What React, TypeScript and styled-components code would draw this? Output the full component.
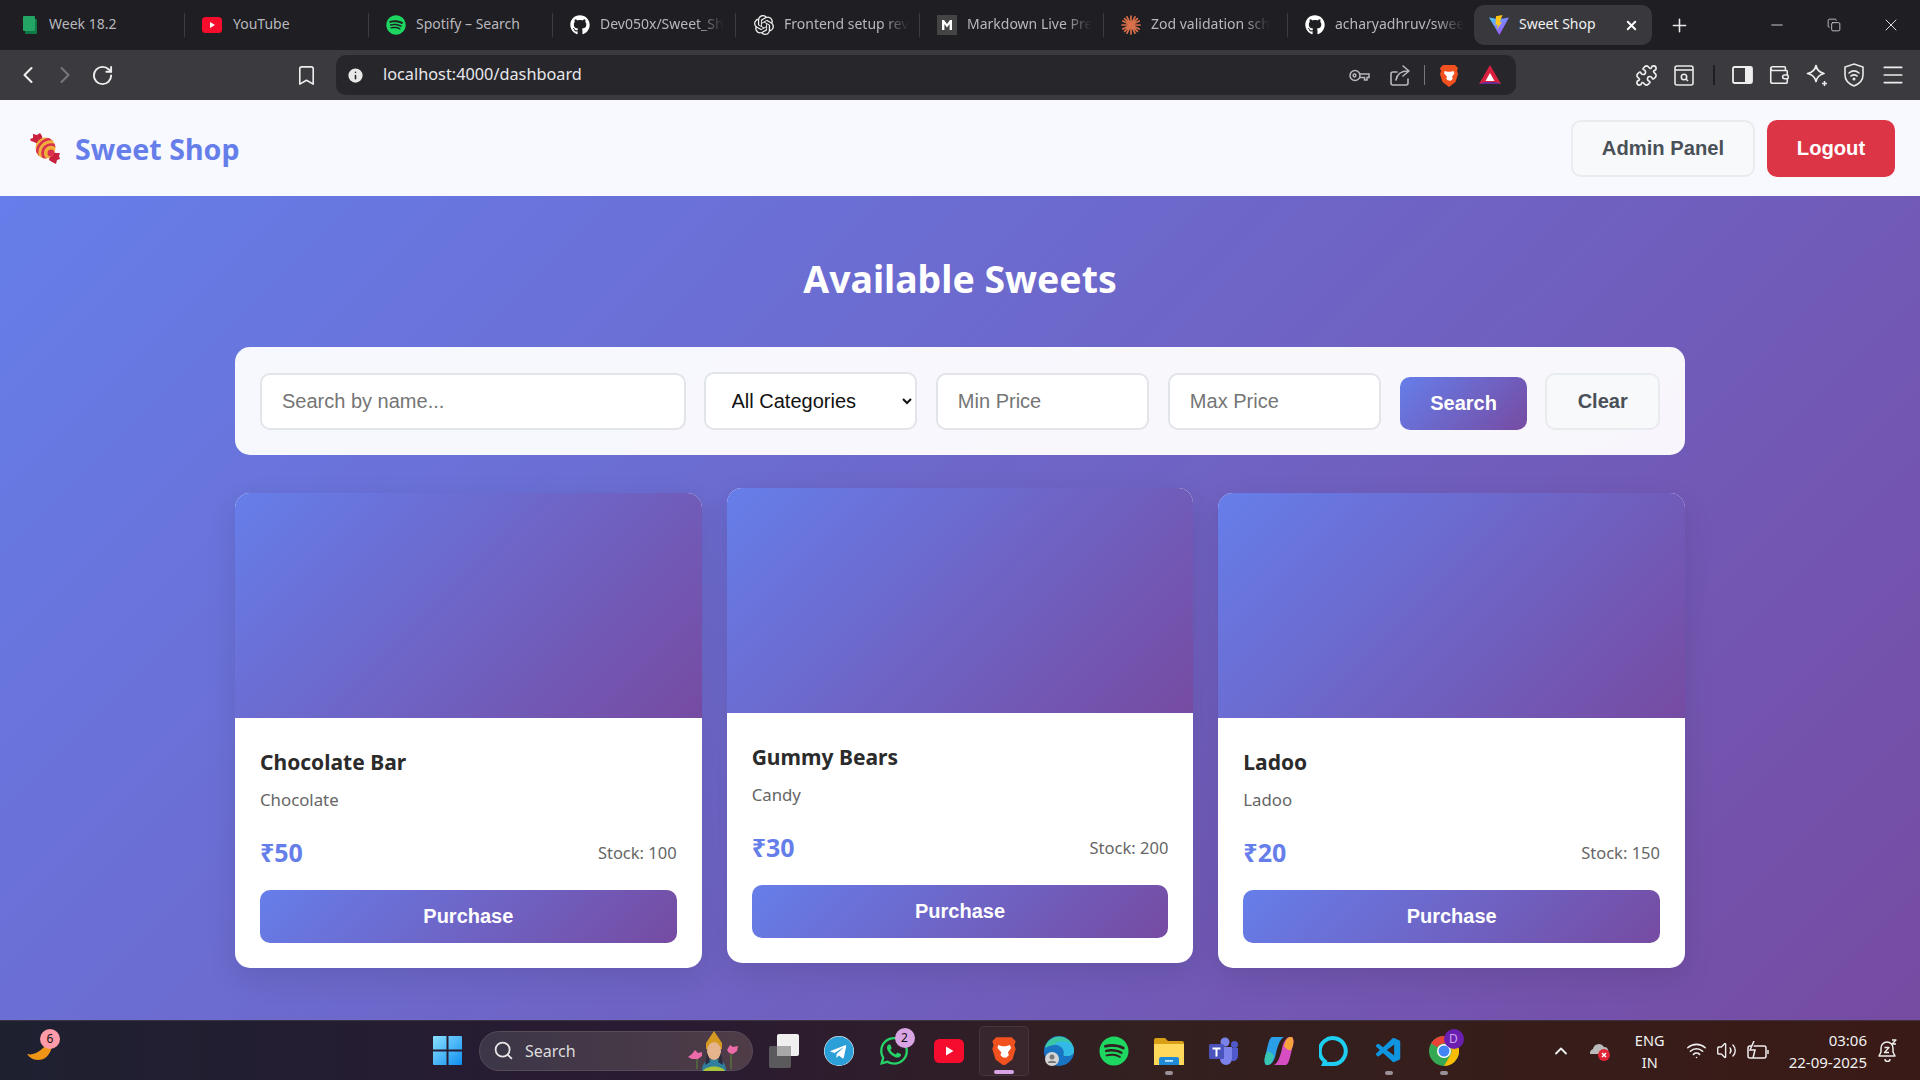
import React from 'react';
import styled, { createGlobalStyle } from 'styled-components';
import { FaGithub, FaSpotify, FaTelegram, FaWhatsapp } from 'react-icons/fa';
import { SiOpenai } from 'react-icons/si';
import { VscVscode } from 'react-icons/vsc';
import {
  Bookmark, ChevronLeft, ChevronRight, ChevronUp, Info, Menu, Plus, Puzzle,
  RotateCw, Search, Volume2, Wallet, Wifi, X, Minus, Copy,
} from 'lucide-react';

const GlobalStyle = createGlobalStyle`
  html, body { margin: 0; padding: 0; width: 1920px; height: 1080px; overflow: hidden; }
  * { box-sizing: border-box; }
  body { font-family: "Noto Sans", "Open Sans", sans-serif; }
`;

const UI = '"Noto Sans", "Open Sans", sans-serif';
const ARIAL = '"Liberation Sans", Arial, sans-serif';
const GRADIENT = 'linear-gradient(135deg, #667eea 0%, #764ba2 100%)';

const YoutubeIcon = ({ size = 20 }: { size?: number }) => (
  <svg width={size} height={size * 0.8} viewBox="0 0 20 16">
    <rect width="20" height="16" rx="3.5" fill="#f60c2c" />
    <path d="M8 5l5 3-5 3z" fill="#fff" />
  </svg>
);

const SheetIcon = () => (
  <svg width="16" height="18" viewBox="0 0 16 18">
    <rect x="3" y="3" width="12" height="15" rx="1" fill="#0f7a45" />
    <rect x="1" y="0" width="12" height="15" rx="1" fill="#23a566" />
  </svg>
);

const MarkdownIcon = () => (
  <svg width="20" height="20" viewBox="0 0 20 20">
    <rect width="20" height="20" fill="#444" />
    <path d="M5 15V5h2l3 4 3-4h2v10h-2.4V9L10 12.5 7.4 9v6z" fill="#fff" />
  </svg>
);

const ZodIcon = () => (
  <svg width="20" height="20" viewBox="0 0 20 20" stroke="#d9704a" strokeWidth="1.7" strokeLinecap="round">
    <path d="M10 1v18M1 10h18M3.6 3.6l12.8 12.8M16.4 3.6L3.6 16.4M6 1.8l8 16.4M14 1.8L6 18.2M1.8 6l16.4 8M18.2 6L1.8 14" />
  </svg>
);

const ViteIcon = () => (
  <svg width="20" height="20" viewBox="0 0 20 20">
    <path d="M0 2.5l10 1.8 10-1.8L10.4 20z" fill="url(#viteFill)" />
    <path d="M13.5 0L7 1.3 6.5 10l2.2-.4-.6 4.4 5-7-2.5.4z" fill="#ffc517" />
    <defs>
      <linearGradient id="viteFill" x1="0" y1="0" x2="1" y2="1">
        <stop offset="0" stopColor="#41d1ff" />
        <stop offset="1" stopColor="#bd34fe" />
      </linearGradient>
    </defs>
  </svg>
);

const BraveIcon = ({ size = 20 }: { size?: number }) => (
  <svg width={size} height={size * 1.15} viewBox="0 0 20 23">
    <path d="M4 1h12l3 3-1 3 1 3-2.5 8L10 23l-6.5-5L1 10l1-3-1-3z" fill="#f1501f" />
    <path d="M5.5 7l3 .8h3l3-.8 1 2.2-2.5 3.5.8 2-2.3 2.3H10 9.5l-2.3-2.3.8-2L5 9.2z" fill="#fff" />
    <path d="M8.5 16.5h3L10 18z" fill="#f1501f" />
  </svg>
);

const BatIcon = () => (
  <svg width="22" height="20" viewBox="0 0 22 20">
    <path d="M11 0l11 19H0z" fill="#d8203e" />
    <path d="M0 19l5-2h12l5 2z" fill="#662d91" />
    <path d="M11 8l4.5 8h-9z" fill="#fff" />
  </svg>
);

const KeyIcon = () => (
  <svg width="21" height="13" viewBox="0 0 21 13" fill="none" stroke="#b8b8bc" strokeWidth="1.5">
    <circle cx="6" cy="6.5" r="5" />
    <circle cx="5.5" cy="6.5" r="1.4" />
    <path d="M11 5h9v3.500h-2v2.500h-2.500V8.500H11" />
  </svg>
);

const ShareIcon = () => (
  <svg width="20" height="21" viewBox="0 0 20 21" fill="none" stroke="#b8b8bc" strokeWidth="1.6" strokeLinecap="round" strokeLinejoin="round">
    <path d="M7 7H3a2 2 0 00-2 2v9a2 2 0 002 2h13a2 2 0 002-2v-4" />
    <path d="M6 15c1-6 5-9 12-9M13 1l6 5-6 5" />
  </svg>
);

const StarIcon = () => (
  <svg width="23" height="23" viewBox="0 0 23 23" fill="none" stroke="#eee" strokeWidth="1.7" strokeLinejoin="round">
    <path d="M10 1.500c1 5 3.500 7 8 8-4.500 1-7 3.500-8 8-1-4.500-3.500-7-8.500-8 5-1 7.500-3 8.500-8z" />
    <path d="M18.500 17v5M16 19.500h5" strokeWidth="1.500" />
  </svg>
);

const ShieldIcon = () => (
  <svg width="20" height="24" viewBox="0 0 20 24" fill="none" stroke="#e8e8e8" strokeWidth="1.600" strokeLinecap="round">
    <path d="M10 1l9 3v8c0 6-4 9-9 11-5-2-9-5-9-11V4z" />
    <path d="M5 10c3-2.500 7-2.500 10 0M7 13c2-1.500 4-1.500 6 0" />
    <circle cx="10" cy="16" r="0.700" />
  </svg>
);

const BellIcon = () => (
  <svg width="19" height="23" viewBox="0 0 19 23" fill="none" stroke="#eee" strokeWidth="1.500" strokeLinejoin="round">
    <path d="M9 3a6 6 0 00-6 6v4l-2 4h16l-2-4V9a6 6 0 00-6-6z" />
    <path d="M7 20a2.500 2.500 0 005 0" />
    <path d="M6.500 8.500h4.500l-4.500 5h4.500M14 1h4l-4 4h4" strokeWidth="1.300" />
  </svg>
);

const CandyIcon = () => (
  <svg width="32" height="32" viewBox="0 0 32 32">
    <defs>
      <clipPath id="candyBall">
        <ellipse cx="16.500" cy="16" rx="10" ry="10.500" />
      </clipPath>
    </defs>
    <path d="M1 7l3-1 0-4 4 1 3-2 2 3 1 5-5 3-4-2-3-1z" fill="#c9213f" />
    <path d="M24 20l3 1 4 0-1 3 1 3-3 1-1 4-4-2-3-2 1-5z" fill="#c9213f" />
    <g clipPath="url(#candyBall)">
      <rect x="5" y="5" width="24" height="24" fill="#f0ae3c" />
      <circle cx="22" cy="21" r="3.500" fill="#d9304f" />
      <circle cx="22" cy="21" r="8.500" fill="none" stroke="#d9304f" strokeWidth="2.600" />
      <circle cx="22" cy="21" r="14" fill="none" stroke="#d9304f" strokeWidth="2.600" />
    </g>
  </svg>
);

const WinIcon = () => (
  <svg width="29" height="29" viewBox="0 0 29 29">
    <defs>
      <linearGradient id="winFill" x1="0" y1="0" x2="1" y2="1">
        <stop offset="0" stopColor="#8ce0ff" />
        <stop offset="1" stopColor="#0f8ff0" />
      </linearGradient>
    </defs>
    <path d="M0 1a1 1 0 011-1h12.500v13.500H0zM15.500 0H28a1 1 0 011 1v12.500H15.500zM0 15.500h13.500V29H1a1 1 0 01-1-1zM15.500 15.500H29V28a1 1 0 01-1 1H15.500z" fill="url(#winFill)" />
  </svg>
);

const MoonIcon = () => (
  <svg width="28" height="28" viewBox="0 0 28 28">
    <path d="M25 2c2 10-2 24-14 24C6 26 2 23 0 20c8 2 17-4 25-18z" fill="#ee9416" />
  </svg>
);

const GoddessIcon = () => (
  <svg width="52" height="40" viewBox="0 0 52 40">
    <path d="M10 38V22M44 38V18" stroke="#5a8a3a" strokeWidth="1" />
    <path d="M1 26l4-3 3-4 3 3 4-1 0 4-4 3-6 0z" fill="#ec6ba8" />
    <path d="M40 19l3-5 3 2 5-1-1 5-4 3-4-1z" fill="#ec6ba8" />
    <path d="M15 40c0-8 4-12 12-12s12 4 12 12z" fill="#2f7f9e" />
    <path d="M19 12l8-12 8 12v6H19z" fill="#d59a22" />
    <ellipse cx="27" cy="20" rx="7" ry="9" fill="#e6b48c" />
    <path d="M20 22l-2 12 5-3zM34 22l2 12-5-3z" fill="#2b2b40" />
    <path d="M16 40c3-6 19-6 22 0z" fill="#a7c43a" />
  </svg>
);

const FilesIcon = () => (
  <svg width="30" height="28" viewBox="0 0 30 28">
    <path d="M0 3a2 2 0 012-2h9l3 3h14a2 2 0 012 2v4H0z" fill="#d89f17" />
    <path d="M0 7h30v21H0z" fill="#ffd85c" />
    <path d="M7 20h16a2 2 0 012 2v6H5v-6a2 2 0 012-2z" fill="#1f8ad6" />
    <rect x="11" y="23" width="8" height="1.800" fill="#bfe3fb" />
  </svg>
);

const TeamsIcon = () => (
  <svg width="30" height="28" viewBox="0 0 30 28">
    <circle cx="16" cy="5" r="4.500" fill="#7b83eb" />
    <circle cx="25.500" cy="7.500" r="3.500" fill="#5059c9" />
    <path d="M19 11h10v8a5 5 0 01-6 5z" fill="#5059c9" />
    <path d="M9 10h14v12a6 6 0 01-12 0z" fill="#7b83eb" />
    <rect y="7" width="15" height="15" rx="1.500" fill="#4b53bc" />
    <path d="M3.500 10.500h8v2H8.500v7h-2v-7h-3z" fill="#fff" />
  </svg>
);

const EdgeIcon = () => (
  <svg width="30" height="30" viewBox="0 0 30 30">
    <circle cx="15" cy="15" r="15" fill="#1a74c4" />
    <path d="M1 12C3 3 12-1 19 1c7 2 11 8 11 14 0 4-4 5-8 5-2 0-3-1-2-3 0-5-5-9-10-8-4 .5-7 2-9 3z" fill="#3bc7a3" />
    <path d="M30 15c0 4-4 5-8 5-2 0-3-1-2-3 0-5-5-9-10-8 4-6 20-5 20 6z" fill="#33b9e8" />
    <circle cx="8" cy="23" r="7" fill="#d5d5d5" />
    <circle cx="8" cy="21" r="2.500" fill="#777" />
    <path d="M3.500 27c1-3 8-3 9 0z" fill="#777" />
  </svg>
);

const CopilotIcon = () => (
  <svg width="30" height="28" viewBox="0 0 30 28">
    <path d="M8 0h12c-4 2-6 8-8 16-1 6-4 12-8 12H2C0 26 0 22 2 16 4 8 5 1 8 0z" fill="#2a9fe8" />
    <path d="M3 15c2-1 5 1 7 4l-2 6c-1 2-3 3-4 3H2C0 26 0 20 3 15z" fill="#38c6b1" />
    <path d="M22 28H10c4-2 6-8 8-16 1-6 4-12 8-12h2c2 2 2 6 0 12-2 8-3 15-6 16z" fill="#d74ec3" />
    <path d="M27 13c-2 1-5-1-7-4l2-6c1-2 3-3 4-3h2c2 2 2 8-1 13z" fill="#f6a33c" />
  </svg>
);

const AlexaIcon = () => (
  <svg width="30" height="30" viewBox="0 0 30 30">
    <path d="M6 25.5A13 13 0 1115 28H5z" fill="none" stroke="#1ecdf0" strokeWidth="4" />
  </svg>
);

const ChromeIcon = () => (
  <svg width="30" height="30" viewBox="0 0 30 30">
    <circle cx="15" cy="15" r="15" fill="#34a853" />
    <path d="M15 0a15 15 0 0113 7.5H15a7.5 7.5 0 00-6.500 3.750L2 7.500A15 15 0 0115 0z" fill="#ea4335" />
    <path d="M28 7.5A15 15 0 0115 30l6.500-11.250A7.5 7.5 0 0015 7.500z" fill="#fbbc04" />
    <circle cx="15" cy="15" r="7" fill="#fff" />
    <circle cx="15" cy="15" r="5.500" fill="#4285f4" />
  </svg>
);

const StackIcon = () => (
  <svg width="30" height="34" viewBox="0 0 30 34">
    <rect x="0" y="12" width="22" height="22" rx="2" fill="#5a5a5c" />
    <rect x="8" y="0" width="22" height="22" rx="2" fill="#f0f0f0" />
    <rect x="8" y="12" width="14" height="10" fill="#a8a8a8" />
  </svg>
);

const CloudIcon = () => (
  <svg width="22" height="22" viewBox="0 0 22 22">
    <path d="M1 14a5 5 0 013-5 6 6 0 0111-2 4 4 0 013 7z" fill="#bbb" />
    <circle cx="15" cy="15" r="6" fill="#e02436" />
    <path d="M13 13l4 4M17 13l-4 4" stroke="#fff" strokeWidth="1.500" />
  </svg>
);

const BatteryIcon = () => (
  <svg width="24" height="20" viewBox="0 0 24 20" fill="none" stroke="#eee" strokeWidth="1.500">
    <rect x="2" y="5" width="18" height="12" rx="2" />
    <path d="M22 9v4" />
    <path d="M8 0L4 9h5l-2 8" fill="#3a1a18" />
  </svg>
);

const PanelIcon = () => (
  <svg width="21" height="18" viewBox="0 0 21 18">
    <rect x="1" y="1" width="19" height="16" rx="1.500" fill="none" stroke="#eee" strokeWidth="1.800" />
    <rect x="13" y="1" width="7" height="16" fill="#eee" />
  </svg>
);

const ReaderIcon = () => (
  <svg width="20" height="21" viewBox="0 0 20 21" fill="none" stroke="#e8e8e8" strokeWidth="1.600">
    <rect x="1" y="1" width="18" height="19" rx="2" />
    <path d="M1 5h18" />
    <circle cx="10" cy="12" r="2.700" />
    <path d="M12 14l2 2" />
  </svg>
);

const tabs = [
  { title: 'Week 18.2', icon: <SheetIcon />, width: 185, inset: 22, gap: 11 },
  { title: 'YouTube', icon: <YoutubeIcon />, width: 184, inset: 17, gap: 11 },
  { title: 'Spotify – Search', icon: <FaSpotify size={20} color="#1ed760" />, width: 184, inset: 17, gap: 10 },
  { title: 'Dev050x/Sweet_Sh', icon: <FaGithub size={20} color="#fff" />, width: 183, inset: 17, gap: 10 },
  { title: 'Frontend setup rev', icon: <SiOpenai size={20} color="#eee" />, width: 184, inset: 18, gap: 10 },
  { title: 'Markdown Live Pre', icon: <MarkdownIcon />, width: 184, inset: 17, gap: 10 },
  { title: 'Zod validation sch', icon: <ZodIcon />, width: 184, inset: 17, gap: 10 },
  { title: 'acharyadhruv/swee', icon: <FaGithub size={20} color="#fff" />, width: 186, inset: 17, gap: 10 },
];

const sweets = [
  { name: 'Chocolate Bar', category: 'Chocolate', price: 50, stock: 100 },
  { name: 'Gummy Bears', category: 'Candy', price: 30, stock: 200, raised: true },
  { name: 'Ladoo', category: 'Ladoo', price: 20, stock: 150 },
];

const App = () => (
  <Screen>
    <GlobalStyle />
    <TabBar>
      {tabs.map((t, i) => (
        <Tab key={t.title} $width={t.width} $inset={t.inset} $gap={t.gap} $last={i === tabs.length - 1}>
          {t.icon}
          <TabTitle $fade={i > 2}>{t.title}</TabTitle>
        </Tab>
      ))}
      <ActiveTab>
        <ViteIcon />
        <ActiveTitle>Sweet Shop</ActiveTitle>
        <X size={15} color="#fff" strokeWidth={3} />
      </ActiveTab>
      <NewTab><Plus size={21} color="#e8e8e8" strokeWidth={1.8} /></NewTab>
      <WindowControls>
        <Minus size={18} color="#ddd" strokeWidth={1.2} />
        <Copy size={14} color="#ddd" strokeWidth={1.4} />
        <X size={20} color="#ddd" strokeWidth={1.2} />
      </WindowControls>
    </TabBar>

    <Toolbar>
      <NavGroup>
        <ChevronLeft size={28} color="#eee" strokeWidth={1.8} />
        <ChevronRight size={28} color="#77777b" strokeWidth={1.8} />
        <RotateCw size={23} color="#eee" strokeWidth={2} />
      </NavGroup>
      <Bookmark size={23} color="#eee" strokeWidth={1.7} />
      <AddressBar>
        <Info size={19} color="#26262b" fill="#e8e8e8" strokeWidth={2} />
        <Url>localhost:4000/dashboard</Url>
        <AddressActions>
          <KeyIcon />
          <ShareIcon />
          <AddressDivider />
          <BraveIcon size={20} />
          <BatIcon />
        </AddressActions>
      </AddressBar>
      <ToolIcons>
        <Puzzle size={23} color="#eee" strokeWidth={1.7} />
        <ReaderIcon />
        <ToolDivider />
        <PanelIcon />
        <Wallet size={22} color="#eee" strokeWidth={1.7} />
        <StarIcon />
        <ShieldIcon />
        <Menu size={26} color="#eee" strokeWidth={1.6} />
      </ToolIcons>
    </Toolbar>

    <SiteHeader>
      <Brand>
        <CandyIcon />
        <BrandName>Sweet Shop</BrandName>
      </Brand>
      <HeaderActions>
        <AdminButton>Admin Panel</AdminButton>
        <LogoutButton>Logout</LogoutButton>
      </HeaderActions>
    </SiteHeader>

    <Main>
      <PageTitle>Available Sweets</PageTitle>
      <FilterCard>
        <NameInput placeholder="Search by name..." />
        <CategorySelect defaultValue="all">
          <option value="all">All Categories</option>
        </CategorySelect>
        <PriceInput placeholder="Min Price" />
        <PriceInput placeholder="Max Price" />
        <SearchButton>Search</SearchButton>
        <ClearButton>Clear</ClearButton>
      </FilterCard>
      <Grid>
        {sweets.map((s) => (
          <Card key={s.name} $raised={s.raised}>
            <CardImage />
            <CardBody>
              <SweetName>{s.name}</SweetName>
              <Category>{s.category}</Category>
              <PriceRow>
                <Price>₹{s.price}</Price>
                <Stock>Stock: {s.stock}</Stock>
              </PriceRow>
              <PurchaseButton>Purchase</PurchaseButton>
            </CardBody>
          </Card>
        ))}
      </Grid>
    </Main>

    <Taskbar>
      <TaskLeft>
        <Badged>
          <MoonIcon />
          <CountBadge $bg="#ff9aa8" $top={-5} $right={-5}>6</CountBadge>
        </Badged>
      </TaskLeft>
      <WinCell><WinIcon /></WinCell>
      <SearchPill>
        <Search size={21} color="#e8e8e8" strokeWidth={2} />
        <PillText>Search</PillText>
        <GoddessSlot><GoddessIcon /></GoddessSlot>
      </SearchPill>
      <TaskIcon><StackIcon /></TaskIcon>
      <TaskIcon><FaTelegram size={30} color="#2a9fd8" style={{ background: '#fff', borderRadius: '50%' }} /></TaskIcon>
      <TaskIcon>
        <Badged>
          <FaWhatsapp size={32} color="#25d366" />
          <CountBadge $bg="#d8a4e4" $top={-7} $right={-5}>2</CountBadge>
        </Badged>
      </TaskIcon>
      <TaskIcon><YoutubeIcon size={30} /></TaskIcon>
      <ActiveTaskIcon>
        <BraveIcon size={26} />
        <Indicator $active />
      </ActiveTaskIcon>
      <TaskIcon><EdgeIcon /></TaskIcon>
      <TaskIcon><FaSpotify size={30} color="#1ed760" /></TaskIcon>
      <TaskIcon><FilesIcon /><Indicator /></TaskIcon>
      <TaskIcon><TeamsIcon /></TaskIcon>
      <TaskIcon><CopilotIcon /></TaskIcon>
      <TaskIcon><AlexaIcon /></TaskIcon>
      <TaskIcon><VscVscode size={30} color="#0f94e0" /><Indicator /></TaskIcon>
      <TaskIcon>
        <Badged>
          <ChromeIcon />
          <CountBadge $bg="#6a1fb0" $color="#cfa6f0" $top={-7} $right={-5}>D</CountBadge>
        </Badged>
        <Indicator />
      </TaskIcon>
      <Tray>
        <ChevronUp size={20} color="#eee" strokeWidth={2.2} />
        <CloudSlot><CloudIcon /></CloudSlot>
        <Lang><span>ENG</span><span>IN</span></Lang>
        <TrayIcons>
          <Wifi size={21} color="#eee" strokeWidth={1.8} />
          <Volume2 size={21} color="#eee" strokeWidth={1.6} />
          <BatteryIcon />
        </TrayIcons>
        <Clock><span>03:06</span><span>22-09-2025</span></Clock>
        <BellIcon />
      </Tray>
    </Taskbar>
  </Screen>
);

export default App;

const Screen = styled.div`
  width: 1920px;
  height: 1080px;
  display: flex;
  flex-direction: column;
  overflow: hidden;
`;

const TabBar = styled.div`
  height: 50px;
  background: #1e1e23;
  display: flex;
  align-items: center;
`;

const Tab = styled.div<{ $width: number; $inset: number; $gap: number; $last?: boolean }>`
  width: ${(p) => p.$width}px;
  height: 24px;
  padding-left: ${(p) => p.$inset}px;
  display: flex;
  align-items: center;
  gap: ${(p) => p.$gap}px;
  flex-shrink: 0;
  border-right: 1px solid ${(p) => (p.$last ? 'transparent' : '#3c3c42')};
  & > svg { flex-shrink: 0; }
`;

const TabTitle = styled.span<{ $fade?: boolean }>`
  font: 14px/20px ${UI};
  margin-top: -2px;
  color: #b8b8bc;
  white-space: nowrap;
  ${(p) =>
    p.$fade &&
    `
    -webkit-mask-image: linear-gradient(90deg, #000 78%, transparent 100%);
    mask-image: linear-gradient(90deg, #000 78%, transparent 100%);
  `}
`;

const ActiveTab = styled.div`
  width: 178px;
  height: 40px;
  background: #38383d;
  border-radius: 10px;
  display: flex;
  align-items: center;
  padding: 0 13px 0 15px;
  gap: 10px;
`;

const ActiveTitle = styled.span`
  font: 14px/20px ${UI};
  margin-top: -2px;
  color: #f2f2f2;
  flex: 1;
`;

const NewTab = styled.div`
  width: 54px;
  display: flex;
  justify-content: center;
`;

const WindowControls = styled.div`
  margin-left: auto;
  width: 152px;
  padding-right: 19px;
  display: flex;
  align-items: center;
  justify-content: space-between;
`;

const Toolbar = styled.div`
  height: 50px;
  background: #3a3a3f;
  display: flex;
  align-items: center;
  padding-left: 14px;
`;

const NavGroup = styled.div`
  width: 281px;
  display: flex;
  align-items: center;
  gap: 9px;
  & > svg:last-child { margin-left: 3px; }
`;

const AddressBar = styled.div`
  margin-left: 18px;
  width: 1180px;
  height: 40px;
  border-radius: 10px;
  background: #26262b;
  display: flex;
  align-items: center;
  padding: 0 15px 0 10px;
`;

const Url = styled.span`
  margin-left: 18px;
  margin-top: -2px;
  font: 16.300px ${UI};
  color: #e8e8ec;
`;

const AddressActions = styled.div`
  margin-left: auto;
  display: flex;
  align-items: center;
  gap: 20px;
`;

const AddressDivider = styled.div`
  width: 1px;
  height: 20px;
  background: #77777b;
  margin: 0 -6px;
`;

const ToolIcons = styled.div`
  margin-left: 119px;
  display: flex;
  align-items: center;
  gap: 15.500px;
`;

const ToolDivider = styled.div`
  width: 2px;
  height: 20px;
  background: #1e1e23;
  margin: 0 1px 0 4px;
`;

const SiteHeader = styled.header`
  height: 96px;
  background: #f8f9ff;
  display: flex;
  align-items: center;
  justify-content: space-between;
  padding: 0 25px 0 29px;
`;

const Brand = styled.div`
  display: flex;
  align-items: center;
  gap: 14px;
`;

const BrandName = styled.span`
  font: 700 28.600px ${UI};
  color: #667eea;
`;

const HeaderActions = styled.div`
  display: flex;
  gap: 12px;
`;

const AdminButton = styled.button`
  width: 184px;
  height: 57px;
  border: 2px solid #e9ecef;
  border-radius: 10px;
  background: #f8f9fa;
  color: #495057;
  font: 700 20.200px ${ARIAL};
`;

const LogoutButton = styled.button`
  width: 128px;
  height: 57px;
  border: 0;
  border-radius: 10px;
  background: #dc3545;
  color: #fff;
  font: 700 20.200px ${ARIAL};
`;

const Main = styled.main`
  flex: 1;
  background: ${GRADIENT};
  display: flex;
  flex-direction: column;
  align-items: center;
  padding-top: 56px;
`;

const PageTitle = styled.h1`
  margin: 0;
  height: 55px;
  font: 700 37.400px/54px ${UI};
  color: #fff;
`;

const FilterCard = styled.section`
  margin-top: 40px;
  width: 1450px;
  height: 108px;
  padding: 25px;
  border-radius: 15px;
  background: rgba(255, 255, 255, 0.95);
  display: flex;
  align-items: center;
  gap: 19px;
`;

const fieldCss = `
  height: 57px;
  border: 2px solid #e1e5e9;
  border-radius: 10px;
  background: #fff;
  font: 20px ${ARIAL};
  outline: none;
  padding: 0 20px;
  &::placeholder { color: #757575; }
`;

const NameInput = styled.input`
  ${fieldCss}
  width: 427px;
  margin-right: -1px;
`;

const CategorySelect = styled.select`
  ${fieldCss}
  width: 214px;
  height: 58px;
  padding-left: 22px;
  color: #111;
`;

const PriceInput = styled.input`
  ${fieldCss}
  width: 213px;
`;

const SearchButton = styled.button`
  width: 128px;
  height: 53px;
  margin: 4px -1px 0 0;
  border: 0;
  border-radius: 10px;
  background: ${GRADIENT};
  color: #fff;
  font: 700 20px ${ARIAL};
`;

const ClearButton = styled.button`
  width: 115px;
  height: 57px;
  border: 2px solid #e9ecef;
  border-radius: 10px;
  background: #f8f9fa;
  color: #495057;
  font: 700 20px ${ARIAL};
`;

const Grid = styled.section`
  margin-top: 38px;
  width: 1450px;
  display: grid;
  grid-template-columns: repeat(3, 1fr);
  gap: 25px;
`;

const Card = styled.article<{ $raised?: boolean }>`
  height: 475px;
  border-radius: 15px;
  overflow: hidden;
  background: #fff;
  box-shadow: 0 10px 30px rgba(0, 0, 0, 0.1);
  ${(p) => p.$raised && 'transform: translateY(-5px);'}
`;

const CardImage = styled.div`
  height: 225px;
  background: ${GRADIENT};
`;

const CardBody = styled.div`
  padding: 29px 25px 25px;
`;

const SweetName = styled.h3`
  margin: 0;
  font: 700 21px/30px ${UI};
  color: #2b2b2b;
`;

const Category = styled.div`
  margin-top: 10px;
  font: 16.800px/26px ${UI};
  color: #666;
`;

const PriceRow = styled.div`
  margin-top: 20px;
  height: 38px;
  display: flex;
  align-items: center;
  justify-content: space-between;
`;

const Price = styled.span`
  font: 700 25px ${UI};
  color: #667eea;
`;

const Stock = styled.span`
  font: 16.500px ${UI};
  color: #666;
`;

const PurchaseButton = styled.button`
  margin-top: 19px;
  width: 100%;
  height: 53px;
  border: 0;
  border-radius: 10px;
  background: ${GRADIENT};
  color: #fff;
  font: 700 20px ${ARIAL};
`;

const Taskbar = styled.footer`
  height: 60px;
  flex-shrink: 0;
  background: linear-gradient(90deg, #1e2030 0%, #2a1b33 35%, #33201f 60%, #3a1a16 100%);
  border-top: 1px solid #3b3340;
  display: flex;
  align-items: center;
`;

const TaskLeft = styled.div`
  width: 420px;
  padding-left: 27px;
`;

const Badged = styled.div`
  position: relative;
  display: inline-flex;
`;

const CountBadge = styled.span<{ $bg: string; $color?: string; $top: number; $right: number }>`
  position: absolute;
  top: ${(p) => p.$top}px;
  right: ${(p) => p.$right}px;
  width: 20px;
  height: 20px;
  border-radius: 50%;
  background: ${(p) => p.$bg};
  color: ${(p) => p.$color ?? '#111'};
  font: 12px/20px ${UI};
  text-align: center;
`;

const WinCell = styled.div`
  width: 59px;
  padding-right: 4px;
  display: flex;
  justify-content: center;
`;

const SearchPill = styled.div`
  width: 274px;
  height: 40px;
  border-radius: 20px;
  background: linear-gradient(90deg, #3c3648, #4f3c47);
  border: 1px solid #564c58;
  display: flex;
  align-items: center;
  padding-left: 13px;
  gap: 11px;
  margin-right: 3px;
`;

const PillText = styled.span`
  font: 16px ${UI};
  color: #ddd;
`;

const GoddessSlot = styled.div`
  margin-left: auto;
  margin-right: 13px;
  display: flex;
`;

const TaskIcon = styled.div`
  position: relative;
  width: 55px;
  height: 50px;
  flex-shrink: 0;
  display: flex;
  align-items: center;
  justify-content: center;
`;

const ActiveTaskIcon = styled(TaskIcon)`
  width: 50px;
  margin: 0 2.5px;
  background: rgba(255, 255, 255, 0.04);
  border: 1px solid rgba(255, 255, 255, 0.07);
  border-radius: 5px;
`;

const Indicator = styled.span<{ $active?: boolean }>`
  position: absolute;
  bottom: 1px;
  left: 50%;
  transform: translateX(-50%);
  width: ${(p) => (p.$active ? 20 : 8)}px;
  height: 4px;
  border-radius: 2px;
  background: ${(p) => (p.$active ? '#d8a4e4' : '#9a9098')};
`;

const Tray = styled.div`
  margin-left: auto;
  padding-right: 23px;
  display: flex;
  align-items: center;
  color: #f2f2f2;
`;

const CloudSlot = styled.div`
  margin-left: 18px;
  display: flex;
`;

const Lang = styled.div`
  margin-left: 19px;
  width: 40px;
  display: flex;
  flex-direction: column;
  align-items: center;
  font: 14.500px/22px ${UI};
`;

const TrayIcons = styled.div`
  margin-left: 16px;
  display: flex;
  align-items: center;
  gap: 9px;
`;

const Clock = styled.div`
  margin-left: 19px;
  margin-right: 11px;
  display: flex;
  flex-direction: column;
  align-items: flex-end;
  font: 15px/22px ${UI};
`;
